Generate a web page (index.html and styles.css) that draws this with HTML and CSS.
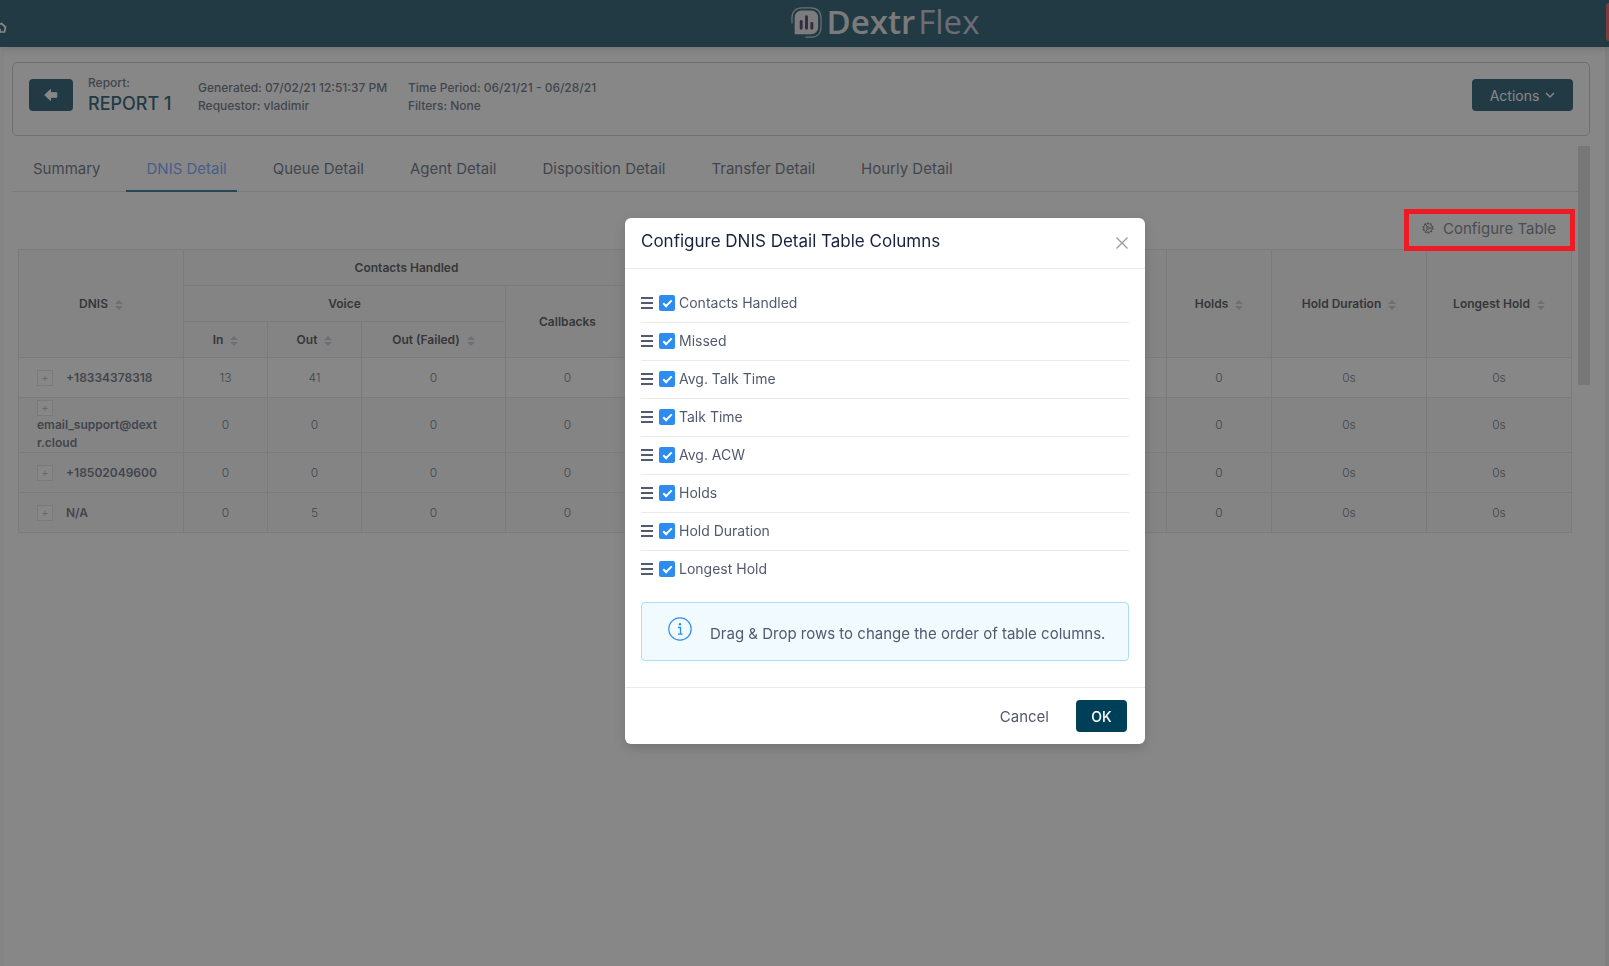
FILE: index.html
```html
<!DOCTYPE html>
<html lang="en">
<head>
<meta charset="utf-8">
<title>DextrFlex – Report</title>
<link rel="stylesheet" href="styles.css">
</head>
<body>
<svg class="defs" width="0" height="0" aria-hidden="true">
  <symbol id="sort" viewBox="0 0 8 12"><path d="M4 1 8 5H0zM4 11 0 7h8z"/></symbol>
  <symbol id="drag" viewBox="0 0 13 12"><path d="M0 1h12M0 6h12M0 11h12" fill="none" stroke="currentColor" stroke-width="2"/></symbol>
</svg>

<header class="topbar">
  <svg class="topbar-edge" viewBox="0 0 7 12" aria-hidden="true"><path d="M-1 2.500 1.500 1.500 5.500 5 4.500 10H0V7" fill="none" stroke="#fff" stroke-width="1.700"/></svg>
  <div class="logo">
    <svg class="logo-mark" viewBox="0 0 32 32" aria-hidden="true">
      <path d="M10 3.500h11a7 7 0 0 1 7 7V21a7 7 0 0 1-7 7H4.500c-.6 0-1-.5-.7-1V10.500a7 7 0 0 1 6.200-7z" fill="#e4e4e4"/>
      <path d="M1 17V11C1 5 5 1 11 1h9M31 12v8c0 7-4 11-10 11h-6M20 1c7 0 11 4 11 11" fill="none" stroke="#b9c3cc" stroke-width="1.300"/>
      <path d="M10.500 15v7M16 10v12M21.500 17v5" stroke="#2c1c52" stroke-width="3" stroke-linecap="round"/>
    </svg>
    <span class="logo-main">Dextr</span><span class="logo-sub">Flex</span>
  </div>
  <span class="topbar-alert"></span>
</header>

<main class="page">
  <section class="card">
    <button class="btn btn-back" type="button" aria-label="Back">
      <svg width="14" height="12" viewBox="0 0 14 12"><path d="M6.500.5v3.200h6.300v4.600H6.500v3.200L.7 6z" fill="currentColor" stroke="currentColor" stroke-linejoin="round"/></svg>
    </button>
    <div class="report"><span>Report:</span><h1>REPORT 1</h1></div>
    <div class="meta"><span>Generated: 07/02/21 12:51:37 PM</span><span>Requestor: vladimir</span></div>
    <div class="meta"><span>Time Period: 06/21/21 - 06/28/21</span><span>Filters: None</span></div>
    <button class="btn btn-actions" type="button">Actions
      <svg width="10" height="7" viewBox="0 0 10 7"><path d="m1 1 4 4 4-4" fill="none" stroke="currentColor" stroke-width="1.500"/></svg>
    </button>
  </section>

  <div class="content">
    <div class="pane">
      <nav class="tabs">
        <a href="#summary">Summary</a>
        <a href="#dnis" class="active">DNIS Detail</a>
        <a href="#queue">Queue Detail</a>
        <a href="#agent">Agent Detail</a>
        <a href="#disposition">Disposition Detail</a>
        <a href="#transfer">Transfer Detail</a>
        <a href="#hourly">Hourly Detail</a>
      </nav>
      <div class="toolbar">
        <div class="configure-wrap">
          <button class="configure" type="button">
            <svg width="12" height="12" viewBox="0 0 12 12" fill="none" stroke="currentColor"><circle cx="6" cy="6" r="4.300" stroke-width="1"/><circle cx="6" cy="6" r="5" stroke-width="1.200" stroke-dasharray="1.700 1.440"/><circle cx="6" cy="6" r="1.400"/><path d="M7.400 6H10M5.300 4.800 4 2.600M5.300 7.200 4 9.400"/></svg>
            Configure Table
          </button>
          <span class="highlight"></span>
        </div>
      </div>
      <table class="grid">
        <colgroup><col class="c-dnis"><col class="c-in"><col class="c-out"><col class="c-failed"><col class="c-callbacks"><col><col><col><col><col class="c-holds"><col class="c-duration"><col class="c-longest"></colgroup>
        <thead>
          <tr>
            <th rowspan="3">DNIS <svg class="sort"><use href="#sort"/></svg></th>
            <th colspan="4">Contacts Handled</th>
            <th rowspan="3"></th>
            <th rowspan="3"></th>
            <th rowspan="3"></th>
            <th rowspan="3"></th>
            <th rowspan="3">Holds <svg class="sort"><use href="#sort"/></svg></th>
            <th rowspan="3">Hold Duration <svg class="sort"><use href="#sort"/></svg></th>
            <th rowspan="3">Longest Hold <svg class="sort"><use href="#sort"/></svg></th>
          </tr>
          <tr><th colspan="3">Voice</th><th rowspan="2">Callbacks</th></tr>
          <tr>
            <th>In <svg class="sort"><use href="#sort"/></svg></th>
            <th>Out <svg class="sort"><use href="#sort"/></svg></th>
            <th>Out (Failed) <svg class="sort"><use href="#sort"/></svg></th>
          </tr>
        </thead>
        <tbody>
          <tr><td class="name"><button class="expand" type="button" aria-label="Expand">+</button>+18334378318</td><td>13</td><td>41</td><td>0</td><td>0</td><td></td><td></td><td></td><td></td><td>0</td><td>0s</td><td>0s</td></tr>
          <tr class="stripe"><td class="name wrap"><button class="expand" type="button" aria-label="Expand">+</button><br>email_support@dext<wbr>r.cloud</td><td>0</td><td>0</td><td>0</td><td>0</td><td></td><td></td><td></td><td></td><td>0</td><td>0s</td><td>0s</td></tr>
          <tr class="stripe"><td class="name"><button class="expand" type="button" aria-label="Expand">+</button>+18502049600</td><td>0</td><td>0</td><td>0</td><td>0</td><td></td><td></td><td></td><td></td><td>0</td><td>0s</td><td>0s</td></tr>
          <tr class="stripe"><td class="name"><button class="expand" type="button" aria-label="Expand">+</button>N/A</td><td>0</td><td>5</td><td>0</td><td>0</td><td></td><td></td><td></td><td></td><td>0</td><td>0s</td><td>0s</td></tr>
        </tbody>
      </table>
    </div>
    <div class="scroll-thumb"></div>
  </div>
</main>

<div class="mask">
  <div class="modal" role="dialog" aria-modal="true" aria-labelledby="modal-title">
    <div class="modal-head">
      <h2 id="modal-title">Configure DNIS Detail Table Columns</h2>
      <button class="close" type="button" aria-label="Close"><svg width="12" height="12" viewBox="0 0 12 12"><path d="m.5.5 11 11m0-11-11 11" stroke="#999" stroke-width="1.200"/></svg></button>
    </div>
    <div class="modal-body">
      <ul class="columns">
        <li><svg class="drag"><use href="#drag"/></svg><label><input type="checkbox" checked>Contacts Handled</label></li>
        <li><svg class="drag"><use href="#drag"/></svg><label><input type="checkbox" checked>Missed</label></li>
        <li><svg class="drag"><use href="#drag"/></svg><label><input type="checkbox" checked>Avg. Talk Time</label></li>
        <li><svg class="drag"><use href="#drag"/></svg><label><input type="checkbox" checked>Talk Time</label></li>
        <li><svg class="drag"><use href="#drag"/></svg><label><input type="checkbox" checked>Avg. ACW</label></li>
        <li><svg class="drag"><use href="#drag"/></svg><label><input type="checkbox" checked>Holds</label></li>
        <li><svg class="drag"><use href="#drag"/></svg><label><input type="checkbox" checked>Hold Duration</label></li>
        <li><svg class="drag"><use href="#drag"/></svg><label><input type="checkbox" checked>Longest Hold</label></li>
      </ul>
      <div class="info">
        <svg width="24" height="24" viewBox="0 0 24 24" fill="none" stroke="#2d8cf0"><circle cx="12" cy="12" r="11.200" stroke-width="1.200"/><path d="M10 10.500h2.500V17M10 17.200h4.500" stroke-width="1.300"/><circle cx="12" cy="7.300" r="1.200" fill="#2d8cf0" stroke="none"/></svg>
        <span>Drag &amp; Drop rows to change the order of table columns.</span>
      </div>
    </div>
    <div class="modal-foot">
      <button class="btn-text" type="button">Cancel</button>
      <button class="btn btn-ok" type="button">OK</button>
    </div>
  </div>
</div>
</body>
</html>
```
FILE: styles.css
```css
* { box-sizing: border-box; }
body {
  margin: 0;
  font: 14px/21px Inter, "Open Sans", sans-serif;
  color: #515a6e;
  background: #fff;
}
button { font: inherit; color: inherit; border: 0; background: none; padding: 0; cursor: pointer; }
h1, h2, ul { margin: 0; padding: 0; font-weight: 400; }
.defs { display: block; }

.topbar {
  position: relative;
  display: flex;
  justify-content: center;
  height: 47px;
  padding-left: 161px;
  background: #003f58;
  box-shadow: 0 2px 8px rgba(0, 0, 0, .2);
}
.topbar-edge { position: absolute; left: 0; top: 22px; width: 7px; height: 12px; }
.topbar-alert { position: absolute; right: 0; top: 3px; width: 3px; height: 38px; border-radius: 4px 0 0 4px; background: #e8424a; }
.logo { display: flex; align-items: center; height: 44px; font-family: "Open Sans", sans-serif; font-size: 33px; line-height: 44px; }
.logo-mark { width: 31px; height: 31px; margin-right: 5px; }
.logo-main { color: #e0e0e0; font-weight: 600; }
.logo-sub { color: #bcbcd6; font-weight: 400; margin-left: 3px; }

.page {
  padding: 15px 15px 0 8px;
  border-left: 4px solid #fbfbfb;
  border-right: 4px solid #ededed;
  min-height: calc(100vh - 47px);
}
.card {
  display: flex;
  align-items: flex-start;
  height: 74px;
  padding: 16px;
  border: 1px solid #c0c2c6;
  border-radius: 5px;
}
.btn { height: 32px; border-radius: 4px; background: #003f58; color: #fff; display: inline-flex; align-items: center; justify-content: center; }
.btn-back { width: 44px; }
.report { display: flex; flex-direction: column; width: 110px; margin: -4px 0 0 15px; font-size: 12px; font-weight: 500; line-height: 16px; }
.report h1 { font-size: 18px; line-height: 26px; font-weight: 500; color: #003f58; white-space: nowrap; }
.meta { display: flex; flex-direction: column; width: 210px; font-size: 12px; font-weight: 500; line-height: 18px; white-space: nowrap; }
.btn-actions { width: 101px; margin-left: auto; gap: 6px; }

.content { display: flex; align-items: flex-start; padding-top: 10px; }
.pane { flex: 1; min-width: 0; }
.scroll-thumb { width: 12px; height: 239px; background: #d6d6d6; }
.tabs { display: flex; gap: 15px; height: 46px; border-bottom: 1px solid #dcdee2; font-size: 15px; }
.tabs a { padding: 12px 10px 0 21px; height: 46px; color: #515a6e; text-decoration: none; }
.tabs a.active { color: #6498ff; border-bottom: 2px solid #0a6080; }
.toolbar { display: flex; justify-content: flex-end; padding: 17px 3px 0 0; height: 58px; }
.configure-wrap { position: relative; display: flex; width: 171px; height: 42px; }
.configure { display: flex; align-items: center; justify-content: flex-end; gap: 9px; width: 100%; padding: 0 19px 4px 0; color: #666d7c; font-size: 15px; white-space: nowrap; }
.highlight { position: absolute; inset: 0; z-index: 20; border: 5px solid #ed1c24; pointer-events: none; }

.grid {
  width: calc(100% - 12px);
  margin: -1px 6px 0;
  table-layout: fixed;
  border-collapse: collapse;
  border: 1px solid #c8cace;
  font-size: 12px;
  line-height: 18px;
  text-align: center;
}
.c-dnis { width: 165px; }
.c-in { width: 84px; }
.c-out { width: 94px; }
.c-failed { width: 144px; }
.c-callbacks { width: 124px; }
.c-holds { width: 105px; }
.c-duration { width: 155px; }
.c-longest { width: 145px; }
.grid th, .grid td { border: 1px solid #e0e2e6; padding: 0; }
.grid th { height: 36px; background: #f8f8f9; color: #33353b; font-weight: 600; }
.grid td { height: 40px; font-weight: 300; }
.grid .stripe td { background: #f8f8f9; }
.grid .name { padding-left: 18px; text-align: left; font-weight: 600; white-space: nowrap; }
.grid .name.wrap { white-space: normal; }
.sort { width: 8px; height: 12px; margin-left: 4px; vertical-align: -3px; fill: #c0c3ca; }
.expand { width: 16px; height: 16px; margin-right: 13px; border: 1px solid #dcdee2; background: #fff; color: #aaa; font-weight: 300; line-height: 14px; vertical-align: middle; }

.mask {
  position: fixed;
  inset: 0;
  z-index: 10;
  display: flex;
  justify-content: center;
  align-items: flex-start;
  padding: 218px 0 0 161px;
  background: rgba(55, 55, 55, .6);
}
.modal { width: 520px; border-radius: 6px; background: #fff; box-shadow: 0 4px 12px rgba(0, 0, 0, .15); }
.modal-head { display: flex; justify-content: space-between; align-items: center; height: 51px; padding: 0 17px 3px 16px; border-bottom: 1px solid #e8eaec; }
.modal-head h2 { font-size: 17px; color: #17233d; }
.close { display: flex; padding-top: 2px; }
.modal-body { padding: 16px 16px 26px; }
.columns { list-style: none; }
.columns li { display: flex; align-items: center; gap: 5px; height: 38px; padding-bottom: 2px; border-bottom: 1px solid #e8eaec; }
.columns li:last-child { border-bottom: 0; padding-bottom: 3px; }
.columns label { display: flex; align-items: center; gap: 4px; }
.drag { width: 13px; height: 12px; color: #515a6e; }
.columns input { position: relative; appearance: none; width: 16px; height: 16px; margin: 0; border-radius: 2px; background: #2d8cf0; }
.columns input:checked::after {
  content: "";
  position: absolute;
  box-sizing: border-box;
  left: 6px;
  top: 3px;
  width: 5px;
  height: 9px;
  border: solid #fff;
  border-width: 0 2px 2px 0;
  transform: rotate(45deg);
}
.info { display: flex; align-items: flex-start; gap: 18px; height: 59px; margin-top: 13px; padding: 14px 16px 14px 26px; border: 1px solid #abdcff; border-radius: 4px; background: #f0faff; font-size: 15px; }
.info svg { flex: none; }
.info span { padding-top: 6px; white-space: nowrap; }
.modal-foot { display: flex; justify-content: flex-end; align-items: center; gap: 27px; height: 57px; padding: 0 18px; border-top: 1px solid #e8eaec; }
.btn-text { font-size: 15px; }
.btn-ok { width: 51px; font-weight: 500; }
```
